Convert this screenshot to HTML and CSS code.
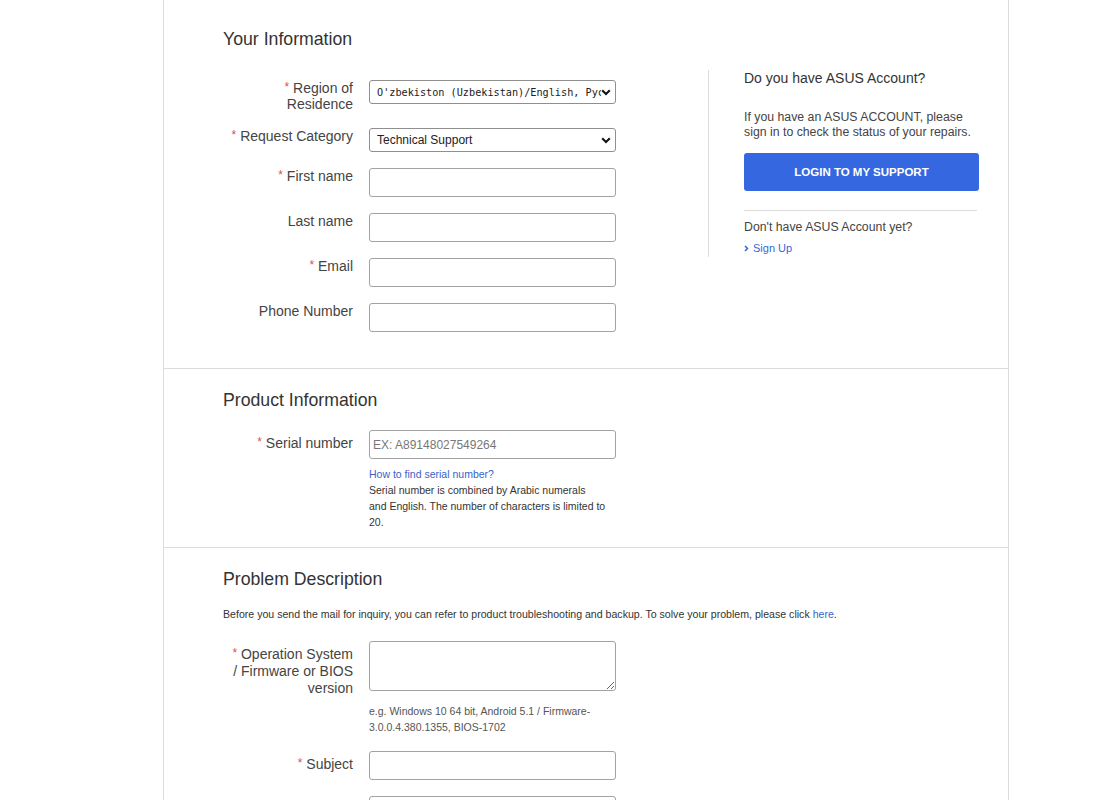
FILE: index.html
```html
<!DOCTYPE html>
<html lang="en">
<head>
<meta charset="utf-8">
<title>ASUS Support - Contact form</title>
<link rel="stylesheet" href="styles.css">
</head>
<body>
<div class="page">

  <section class="section section--info">
    <h2 class="section-title">Your Information</h2>
    <div class="cols">
      <div class="form-col">
        <div class="row">
          <label class="label"><span class="req">*</span> Region of Residence</label>
          <div class="field">
            <div class="select-wrap">
              <select class="select select--mono">
                <option>O'zbekiston (Uzbekistan)/English, Русский</option>
              </select>
              <svg class="chev" width="10" height="7" viewBox="0 0 10 7"><path d="M1.2 1.2 5 5l3.8-3.8" fill="none" stroke="#111" stroke-width="2"/></svg>
            </div>
          </div>
        </div>
        <div class="row">
          <label class="label"><span class="req">*</span> Request Category</label>
          <div class="field">
            <div class="select-wrap">
              <select class="select">
                <option>Technical Support</option>
              </select>
              <svg class="chev" width="10" height="7" viewBox="0 0 10 7"><path d="M1.2 1.2 5 5l3.8-3.8" fill="none" stroke="#111" stroke-width="2"/></svg>
            </div>
          </div>
        </div>
        <div class="row">
          <label class="label"><span class="req">*</span> First name</label>
          <div class="field"><input class="input" type="text"></div>
        </div>
        <div class="row">
          <label class="label">Last name</label>
          <div class="field"><input class="input" type="text"></div>
        </div>
        <div class="row">
          <label class="label"><span class="req">*</span> Email</label>
          <div class="field"><input class="input" type="text"></div>
        </div>
        <div class="row">
          <label class="label">Phone Number</label>
          <div class="field"><input class="input" type="text"></div>
        </div>
      </div>

      <aside class="account">
        <h3 class="account-title">Do you have ASUS Account?</h3>
        <p class="account-text">If you have an ASUS ACCOUNT, please sign in to check the status of your repairs.</p>
        <button class="login-btn" type="button">LOGIN TO MY SUPPORT</button>
        <div class="account-sep"></div>
        <p class="account-text account-text--tight">Don't have ASUS Account yet?</p>
        <a class="signup" href="#"><svg class="signup-chev" width="5" height="7" viewBox="0 0 5 7"><path d="M1 1l2.5 2.5L1 6" fill="none" stroke="#3567d8" stroke-width="1.5"/></svg>Sign Up</a>
      </aside>
    </div>
  </section>

  <section class="section section--product">
    <h2 class="section-title section-title--tight">Product Information</h2>
    <div class="row row--offset">
      <label class="label"><span class="req">*</span> Serial number</label>
      <div class="field">
        <input class="input" type="text" placeholder="EX: A89148027549264">
        <div class="help">
          <a class="help-link" href="#">How to find serial number?</a><br>
          Serial number is combined by Arabic numerals<br>
          and English. The number of characters is limited to 20.
        </div>
      </div>
    </div>
  </section>

  <section class="section section--problem">
    <h2 class="section-title section-title--tight">Problem Description</h2>
    <p class="intro">Before you send the mail for inquiry, you can refer to product troubleshooting and backup. To solve your problem, please click <a class="help-link" href="#">here</a>.</p>
    <div class="row row--offset">
      <label class="label"><span class="req">*</span> Operation System<br>/ Firmware or BIOS version</label>
      <div class="field">
        <textarea class="textarea"></textarea>
        <div class="hint">e.g. Windows 10 64 bit, Android 5.1 / Firmware-3.0.0.4.380.1355, BIOS-1702</div>
      </div>
    </div>
    <div class="row row--offset">
      <label class="label"><span class="req">*</span> Subject</label>
      <div class="field"><input class="input" type="text"></div>
    </div>
    <div class="row row--offset">
      <label class="label"><span class="req">*</span> Description</label>
      <div class="field"><textarea class="textarea textarea--big"></textarea></div>
    </div>
  </section>

</div>
</body>
</html>
```

FILE: styles.css
```css
* { box-sizing: border-box; }

html, body {
  margin: 0;
  padding: 0;
  background: #fff;
}

body {
  font-family: "Liberation Sans", Arial, sans-serif;
  color: #333;
}

.page {
  width: 846px;
  margin-left: 163px;
  border-left: 1px solid #dcdcdc;
  border-right: 1px solid #dcdcdc;
  min-height: 800px;
}

.section {
  border-bottom: 1px solid #dcdcdc;
  padding-left: 59px;
}

.section--info {
  padding-top: 28px;
  padding-bottom: 20px;
}

.section--product {
  padding-top: 20px;
  padding-bottom: 1px;
}

.section--problem {
  padding-top: 20px;
  border-bottom: none;
}

.section-title {
  margin: 0 0 20px;
  font-size: 17.7px;
  line-height: 22px;
  font-weight: normal;
  color: #333;
}

.section-title--tight {
  margin-bottom: 19px;
}

.section--problem .section-title {
  margin-bottom: 16px;
}

.cols {
  display: flex;
  align-items: flex-start;
}

.form-col {
  width: 393px;
  margin-top: 10px;
}

.row {
  display: flex;
  align-items: flex-start;
  margin-bottom: 16px;
}

.label {
  width: 130px;
  flex: none;
  margin-right: 16px;
  text-align: right;
  font-size: 14px;
  line-height: 17px;
  color: #444;
}

.section--info .label {
  line-height: 16px;
}

.row--offset .label {
  padding-top: 5px;
}

.req {
  color: #d9534f;
  font-size: 12px;
  line-height: 0;
  vertical-align: 2px;
}

.field {
  width: 247px;
  flex: none;
}

.input {
  display: block;
  width: 247px;
  height: 29px;
  border: 1px solid #a3a3a3;
  border-radius: 3px;
  padding: 0 3px;
  font-family: "Liberation Sans", Arial, sans-serif;
  font-size: 12px;
  color: #333;
  background: #fff;
  outline: none;
}

.input::placeholder {
  color: #777;
}

.select-wrap {
  position: relative;
  width: 247px;
  height: 24px;
}

.select {
  display: block;
  width: 247px;
  height: 24px;
  border: 1px solid #8f8f8f;
  border-radius: 3px;
  padding: 0 22px 0 7px;
  font-family: "Liberation Sans", Arial, sans-serif;
  font-size: 12px;
  color: #222;
  background: #fff;
  -webkit-appearance: none;
  appearance: none;
  outline: none;
}

.select--mono {
  font-family: "DejaVu Sans Mono", "Liberation Mono", monospace;
  font-size: 10.2px;
  padding-right: 10px;
}

.chev {
  position: absolute;
  right: 5px;
  top: 9px;
  pointer-events: none;
  background: #fff;
}

.textarea {
  display: block;
  width: 247px;
  height: 50px;
  border: 1px solid #a3a3a3;
  border-radius: 3px;
  font-family: "Liberation Sans", Arial, sans-serif;
  font-size: 12px;
  resize: vertical;
  outline: none;
}

.textarea--big {
  height: 120px;
}

.help {
  margin-top: 7px;
  font-size: 10.5px;
  line-height: 16px;
  color: #333;
}

.help-link {
  color: #3b5fc9;
  text-decoration: none;
}

.hint {
  margin-top: 12px;
  font-size: 10.5px;
  line-height: 16px;
  color: #555;
}

.intro {
  margin: 0 0 19px;
  font-size: 10.6px;
  line-height: 16px;
  color: #333;
}

/* account panel */
.account {
  margin-left: 92px;
  width: 272px;
  border-left: 1px solid #dcdcdc;
  padding-left: 35px;
  padding-bottom: 1px;
}

.account-title {
  margin: 0;
  font-size: 14px;
  line-height: 16px;
  font-weight: normal;
  color: #333;
}

.account-text {
  margin: 24px 0 0;
  font-size: 12.3px;
  line-height: 15px;
  color: #444;
  width: 236px;
}

.account-text--tight {
  margin-top: 9px;
}

.login-btn {
  display: block;
  margin-top: 13px;
  width: 235px;
  height: 38px;
  border: none;
  border-radius: 3px;
  background: #3568e0;
  color: #fff;
  font-family: "Liberation Sans", Arial, sans-serif;
  font-size: 11.5px;
  font-weight: bold;
  cursor: pointer;
}

.account-sep {
  margin-top: 19px;
  width: 233px;
  height: 1px;
  background: #dcdcdc;
}

.signup {
  display: block;
  margin-top: 5px;
  font-size: 11px;
  line-height: 16px;
  color: #3567d8;
  text-decoration: none;
}

.signup-chev {
  margin-right: 4px;
  vertical-align: 0;
}
```
